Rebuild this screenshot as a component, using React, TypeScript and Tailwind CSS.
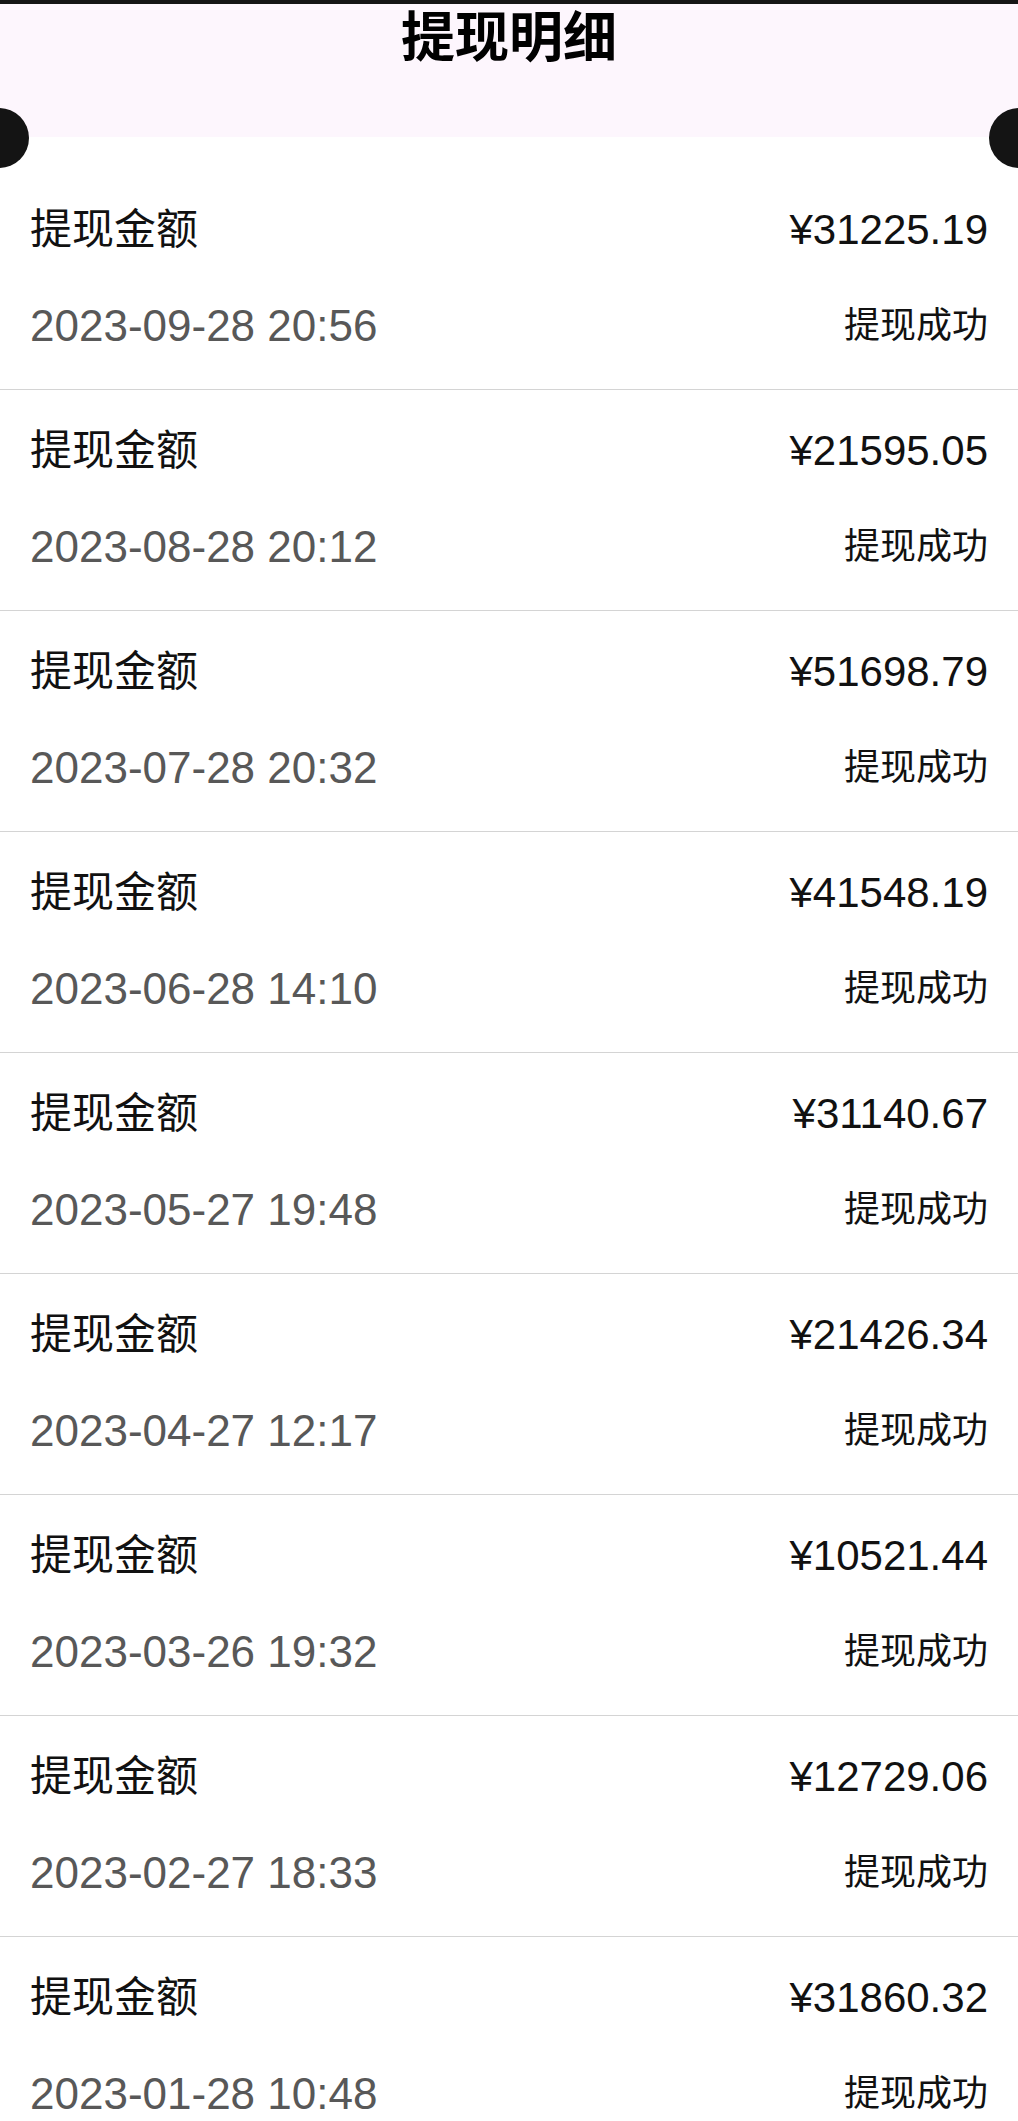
const RECORDS = [
  { amount: "¥31225.19", time: "2023-09-28 20:56" },
  { amount: "¥21595.05", time: "2023-08-28 20:12" },
  { amount: "¥51698.79", time: "2023-07-28 20:32" },
  { amount: "¥41548.19", time: "2023-06-28 14:10" },
  { amount: "¥31140.67", time: "2023-05-27 19:48" },
  { amount: "¥21426.34", time: "2023-04-27 12:17" },
  { amount: "¥10521.44", time: "2023-03-26 19:32" },
  { amount: "¥12729.06", time: "2023-02-27 18:33" },
  { amount: "¥31860.32", time: "2023-01-28 10:48" },
];

export default function App() {
  return (
    <div className="w-[1018px] bg-white font-['Liberation_Sans','Noto_Sans_CJK_SC',sans-serif] overflow-hidden">
      {/* ── HEADER ─────────────────────────────────── */}
      <div className="relative">
        <div className="h-[4px] bg-[#151515]" />
        <div className="h-[133px] bg-[#fdf6fd] flex justify-center">
          <h1 className="mt-[-2px] text-[54px] font-bold leading-[64px] text-black font-['Noto_Sans_CJK_SC',sans-serif]">
            提现明细
          </h1>
        </div>
        {/* ticket notches */}
        <div className="absolute left-[-31px] top-[108px] w-[60px] h-[60px] rounded-full bg-[#141414]" />
        <div className="absolute right-[-31px] top-[108px] w-[60px] h-[60px] rounded-full bg-[#141414]" />
      </div>

      {/* ── LIST ───────────────────────────────────── */}
      <div className="pt-[32px]">
        {RECORDS.map(({ amount, time }) => (
          <div
            key={time}
            className="h-[221px] border-b border-[#d4d4d4] px-[30px] pt-[31px] flex flex-col"
          >
            <div className="h-[60px] flex items-center justify-between">
              <span className="text-[42px] leading-none text-[#111]">提现金额</span>
              <span className="text-[42px] leading-none text-[#111]">{amount}</span>
            </div>
            <div className="mt-[36px] h-[60px] flex items-center justify-between">
              <span className="text-[44px] leading-none text-[#585858]">{time}</span>
              <span className="text-[36px] leading-none text-[#111]">提现成功</span>
            </div>
          </div>
        ))}
      </div>
    </div>
  );
}
